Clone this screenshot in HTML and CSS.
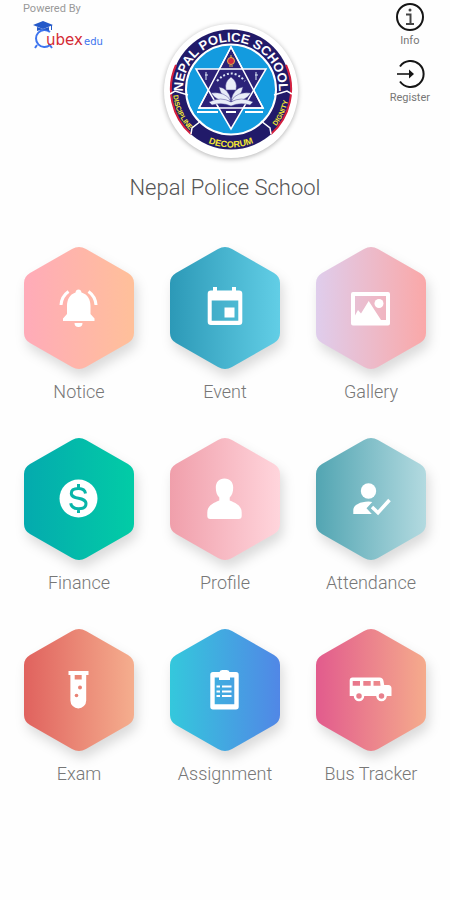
FILE: index.html
```
<!DOCTYPE html>
<html lang="en">
<head>
    <meta charset="UTF-8">
    <meta name="viewport" content="width=device-width, initial-scale=1.0">
    <title>Nepal Police School</title>
    <link rel="stylesheet" href="styles.css">
</head>
<body>

<!-- shared shapes and gradients -->
<svg class="defs" width="0" height="0" aria-hidden="true">
    <defs>
        <path id="hex" d="M48 2Q55-2 62 2L104 26Q110 29.500 110 36V86Q110 92.500 104 96L62 120Q55 124 48 120L6 96Q0 92.500 0 86V36Q0 29.500 6 26Z"/>
        <linearGradient id="g-notice"><stop stop-color="#ffabb9"/><stop offset="1" stop-color="#ffc09a"/></linearGradient>
        <linearGradient id="g-event"><stop stop-color="#2c99b7"/><stop offset="1" stop-color="#62cee6"/></linearGradient>
        <linearGradient id="g-gallery"><stop stop-color="#dfcdec"/><stop offset="1" stop-color="#faa8a8"/></linearGradient>
        <linearGradient id="g-finance"><stop stop-color="#04aaae"/><stop offset="1" stop-color="#02cca6"/></linearGradient>
        <linearGradient id="g-profile"><stop stop-color="#f09fab"/><stop offset="1" stop-color="#ffd5dc"/></linearGradient>
        <linearGradient id="g-attendance"><stop stop-color="#52a5b2"/><stop offset="1" stop-color="#b3dae0"/></linearGradient>
        <linearGradient id="g-exam"><stop stop-color="#e0625e"/><stop offset="1" stop-color="#f5ae8e"/></linearGradient>
        <linearGradient id="g-assignment"><stop stop-color="#34c8dc"/><stop offset="1" stop-color="#5187e6"/></linearGradient>
        <linearGradient id="g-bus"><stop stop-color="#e25b8d"/><stop offset="1" stop-color="#f5ab8c"/></linearGradient>
    </defs>
</svg>

<header class="top">
    <div class="brand">
        <span class="powered">Powered By</span>
        <svg class="brand-logo" width="72" height="30" viewBox="0 0 72 30">
            <path d="M17 12A8.500 8.500 0 1 0 17 25" fill="none" stroke="#3d74ee" stroke-width="2"/>
            <path d="M4 25l-2 3M16 24l3 4" stroke="#3d74ee" stroke-width="2"/>
            <path d="M0 5L10 1L20 5L10 9Z" fill="#2459c9"/>
            <path d="M4 7l6 2 6-2v4q-6-3-12 0z" fill="#2459c9"/>
            <path d="M18.500 5v5" stroke="#2459c9"/>
            <text class="logo-ubex" x="13" y="25">ubex</text>
            <text class="logo-edu" x="51" y="25">edu</text>
        </svg>
    </div>

    <svg class="emblem" width="134" height="134" viewBox="0 0 134 134" role="img" aria-label="School emblem">
        <defs>
            <path id="arc-top" d="M19.300 71A48 48 0 1 1 114.700 71"/>
            <path id="arc-bottom" d="M9 65.500A58 58 0 0 0 125 65.500"/>
        </defs>
        <circle cx="67" cy="65.500" r="60" fill="#211a69"/>
        <path d="M12 41A60 60 0 0 0 27 110M122 41A60 60 0 0 1 107 110" fill="none" stroke="#d3203f" stroke-width="2"/>
        <circle cx="67" cy="65.500" r="45" fill="#139bdf" stroke="#fff" stroke-width="2"/>
        <g fill="none" stroke="#fff" stroke-width="1.500">
            <path d="M6 70l5-3 13 4M128 70l-5-3-13 4M27 110l1-6 9-7M107 110l-1-6-9-7"/>
        </g>
        <g fill="#2b2278" stroke="#fff" stroke-width="1.500">
            <path d="M67 23L99 84H35Z"/>
            <path d="M32 45H102L67 105Z"/>
            <path d="M67 23L99 84H35Z" fill="none"/>
        </g>
        <circle cx="67" cy="37" r="3.500" fill="#d02740" stroke="#e0b04a"/>
        <path d="M65 42h4M67 31v3" stroke="#e0b04a"/>
        <path d="M42 48v8M41 51h3M92 48v8M91 51h3" stroke="#dce6f5"/>
        <path d="M53 57Q67 42 81 57" fill="none" stroke="#dce6f5" stroke-width="2" stroke-dasharray="2 2"/>
        <g fill="#e9edf8" stroke="#514b96" stroke-width=".500">
            <path d="M67 53q7 5 5 13h-10q-2-8 5-13z"/>
            <path d="M67 76q-10-2-12-13 9 1 12 13zM67 76q10-2 12-13-9 1-12 13z"/>
            <path d="M67 77q-13 2-20-8 14-2 20 8zM67 77q13 2 20-8-14-2-20 8z"/>
            <path d="M45 78q12-6 22 0 10-6 22 0l-3 3q-10-3-19 1-9-4-19-1z"/>
        </g>
        <path d="M33 88h21M62 88h10M81 88h18" stroke="#fff" stroke-width="2"/>
        <text class="emblem-name"><textPath href="#arc-top" startOffset="50%">NEPAL POLICE SCHOOL</textPath></text>
        <text class="emblem-side"><textPath href="#arc-bottom" startOffset="14%">DISCIPLINE</textPath></text>
        <text class="emblem-base"><textPath href="#arc-bottom" startOffset="50%">DECORUM</textPath></text>
        <text class="emblem-side"><textPath href="#arc-bottom" startOffset="86%">DIGNITY</textPath></text>
    </svg>

    <nav class="actions">
        <a class="action" href="#info">
            <svg width="30" height="30" viewBox="0 0 30 30" fill="none" stroke="#151515" stroke-width="2">
                <circle cx="15" cy="15" r="13"/>
                <path d="M11 12.500h4.500V22M11 22h8" stroke="#444"/>
                <circle cx="15" cy="8" r="1.500" fill="#444" stroke="none"/>
            </svg>
            <span>Info</span>
        </a>
        <a class="action" href="#register">
            <svg width="30" height="30" viewBox="0 0 30 30" fill="none" stroke="#151515" stroke-width="2">
                <path d="M5 7.500A13 13 0 1 1 5 22.500"/>
                <path d="M2 15h14" stroke="#444"/>
                <path d="M14 10.500l5 4.500-5 4.500z" fill="#151515" stroke="none"/>
            </svg>
            <span>Register</span>
        </a>
    </nav>
</header>

<h1>Nepal Police School</h1>

<main class="menu">
    <a class="tile" href="#notice">
        <svg width="110" height="122" viewBox="0 0 110 122">
            <use href="#hex" class="hex" fill="url(#g-notice)"/>
            <path d="M54.500 42.500c1.700 0 2.700 1.100 3 3C64 47.500 66.500 53 66.500 59v8l4 4.500V74H39v-2.500l4-4.500v-8c0-6 2.500-11.500 8.500-13.500.300-1.900 1.300-3 3-3zM50.500 76h8a4 4 0 0 1-8 0z" fill="#fff"/>
            <path d="M44.500 44.500Q37.500 49.500 37 58M64.500 44.500Q71.500 49.500 72 58" fill="none" stroke="#fff" stroke-width="3"/>
        </svg>
        <span>Notice</span>
    </a>
    <a class="tile" href="#event">
        <svg width="110" height="122" viewBox="0 0 110 122">
            <use href="#hex" class="hex" fill="url(#g-event)"/>
            <path fill-rule="evenodd" d="M43 40h4v3.500h15V40h4v3.500h3q3.300 0 3.300 3.300v28q0 3.300-3.300 3.300H41q-3.300 0-3.300-3.300v-28q0-3.300 3.300-3.300h2zM41.700 53.500v20.300h26.600V53.500zM54.500 60.500h10v10h-10z" fill="#fff"/>
        </svg>
        <span>Event</span>
    </a>
    <a class="tile" href="#gallery">
        <svg width="110" height="122" viewBox="0 0 110 122">
            <use href="#hex" class="hex" fill="url(#g-gallery)"/>
            <path fill-rule="evenodd" d="M37 45h35q2 0 2 2v29.500q0 2-2 2H37q-2 0-2-2V47q0-2 2-2zM39 49v19.500l3-5.500 3 3.500 7.700-12.500L65 73h5V49z" fill="#fff"/>
            <circle cx="63" cy="56.500" r="4.500" fill="#fff"/>
        </svg>
        <span>Gallery</span>
    </a>
    <a class="tile" href="#finance">
        <svg width="110" height="122" viewBox="0 0 110 122">
            <use href="#hex" class="hex" fill="url(#g-finance)"/>
            <circle cx="54.500" cy="60.500" r="19" fill="#fff"/>
            <path d="M61.500 55.500C61 52 58.500 50.500 54.500 50.500 50 50.500 47.300 52.300 47.300 55.200 47.300 62.500 62 58 62 65.700 62 69 59 70.700 54.500 70.700 50 70.700 47.300 69 46.700 65.300M54.500 46v4.500M54.500 70.700V75" fill="none" stroke="#07b5a9" stroke-width="3"/>
        </svg>
        <span>Finance</span>
    </a>
    <a class="tile" href="#profile">
        <svg width="110" height="122" viewBox="0 0 110 122">
            <use href="#hex" class="hex" fill="url(#g-profile)"/>
            <path d="M54.500 40.500c5.500 0 8.700 3.800 8.700 9 0 4.500-1 7.500-3.500 10v3c6 2.500 12 5 12 12V78q0 3-3 3H40.300q-3 0-3-3v-3.500c0-7 6-9.500 12-12v-3c-2.500-2.500-3.500-5.500-3.500-10 0-5.200 3.200-9 8.700-9z" fill="#fff"/>
        </svg>
        <span>Profile</span>
    </a>
    <a class="tile" href="#attendance">
        <svg width="110" height="122" viewBox="0 0 110 122">
            <use href="#hex" class="hex" fill="url(#g-attendance)"/>
            <circle cx="52.500" cy="53" r="7.700" fill="#fff"/>
            <path d="M52.500 63.500c-8 0-15.200 3.500-15.200 8.500v4h18.500l-5.300-5.700 5.800-6.400q-1.600-.400-3.800-.400z" fill="#fff"/>
            <path d="M56 69l6 5.700L73.500 62" fill="none" stroke="#fff" stroke-width="3.500"/>
        </svg>
        <span>Attendance</span>
    </a>
    <a class="tile" href="#exam">
        <svg width="110" height="122" viewBox="0 0 110 122">
            <use href="#hex" class="hex" fill="url(#g-exam)"/>
            <path fill-rule="evenodd" d="M44.500 42h20v4H62.200v25.500a7.900 7.900 0 0 1-15.800 0V46h-1.900zM50.700 46v4.500h7V46z" fill="#fff"/>
            <circle cx="56" cy="58.500" r="2" fill="#e98275"/>
            <circle cx="52.500" cy="66.500" r="1.800" fill="#e98275"/>
        </svg>
        <span>Exam</span>
    </a>
    <a class="tile" href="#assignment">
        <svg width="110" height="122" viewBox="0 0 110 122">
            <use href="#hex" class="hex" fill="url(#g-assignment)"/>
            <path fill-rule="evenodd" d="M49.500 43q.500-2 3-2h4q2.500 0 3 2h6.500q2.700 0 2.700 2.700v32q0 2.700-2.700 2.700H43q-2.700 0-2.700-2.700v-32Q40.300 43 43 43zM44.700 48.500v26.700h19.600V48.500H60V51H49v-2.500z" fill="#fff"/>
            <path d="M46.500 57.500h3.500M52 57.500h9.500M46.500 62.500h3.500M52 62.500h9.500M46.500 67h3.500M52 67h9.500" stroke="#fff" stroke-width="2"/>
        </svg>
        <span>Assignment</span>
    </a>
    <a class="tile" href="#bus">
        <svg width="110" height="122" viewBox="0 0 110 122">
            <use href="#hex" class="hex" fill="url(#g-bus)"/>
            <path fill-rule="evenodd" d="M36.500 48.500h27q3.500 0 4 3.500l.700 4h4q3.300 0 3.300 3.500V67H70.500a5 5 0 0 1-9.800 0H48a5 5 0 0 1-9.800 0H33.700V51.500q0-3 2.800-3zM36.700 52v4.700H44V52zM47.300 52v4.700h7.400V52zM57.500 52v4.700h7L64 52z" fill="#fff"/>
            <g fill="#e8808d" stroke="#fff" stroke-width="2.500">
                <circle cx="43" cy="67" r="4"/>
                <circle cx="65.500" cy="67" r="4"/>
            </g>
        </svg>
        <span>Bus Tracker</span>
    </a>
</main>

</body>
</html>
```

FILE: styles.css
```
body {
    margin: 0;
    min-height: 100vh;
    background: #fefefe;
    font-family: Roboto, "Liberation Sans", sans-serif;
    font-weight: 300;
}

a {
    color: inherit;
    text-decoration: none;
}

svg {
    display: block;
}

.defs {
    position: absolute;
}

.top {
    display: grid;
    grid-template-columns: 1fr auto 1fr;
    align-items: start;
    padding: 0 12px 0 23px;
}

.brand {
    display: flex;
    flex-direction: column;
    gap: 3px;
}

.powered {
    font-size: 11px;
    line-height: 17px;
    font-weight: 400;
    color: #999;
}

.brand-logo {
    margin-left: 10px;
}

.logo-ubex {
    font: 400 15px "DejaVu Sans", sans-serif;
    fill: #d42a35;
}

.logo-edu {
    font: 400 10px "DejaVu Sans", sans-serif;
    fill: #3d74ee;
}

.emblem {
    margin-top: 24px;
    border-radius: 50%;
    background: #fff;
    box-shadow: 0 1px 5px rgba(0, 0, 0, 0.3);
}

.emblem text {
    font-family: "Liberation Sans", sans-serif;
    font-weight: bold;
    text-anchor: middle;
    fill: #f4e832;
}

.emblem .emblem-name {
    font-size: 13px;
    fill: #fff;
}

.emblem-base {
    font-size: 9px;
}

.emblem-side {
    font-size: 7px;
}

.actions {
    justify-self: end;
    display: flex;
    flex-direction: column;
    align-items: center;
    gap: 11px;
    padding: 2px 8px 0 0;
}

.action {
    display: flex;
    flex-direction: column;
    align-items: center;
    gap: 1px;
    font-size: 11px;
    line-height: 15px;
    font-weight: 400;
    color: #777;
}

h1 {
    margin: 16px 0 45px;
    font-size: 22px;
    line-height: 28px;
    font-weight: 300;
    text-align: center;
    color: #555;
}

.menu {
    display: grid;
    grid-template-columns: repeat(3, 1fr);
    row-gap: 34px;
    padding: 0 6px;
}

.tile {
    display: flex;
    flex-direction: column;
    align-items: center;
    gap: 11px;
    font-size: 18px;
    line-height: 24px;
    color: #777;
}

.tile svg {
    overflow: visible;
}

.hex {
    filter: drop-shadow(3px 7px 6px rgba(0, 0, 0, 0.14));
}
```
